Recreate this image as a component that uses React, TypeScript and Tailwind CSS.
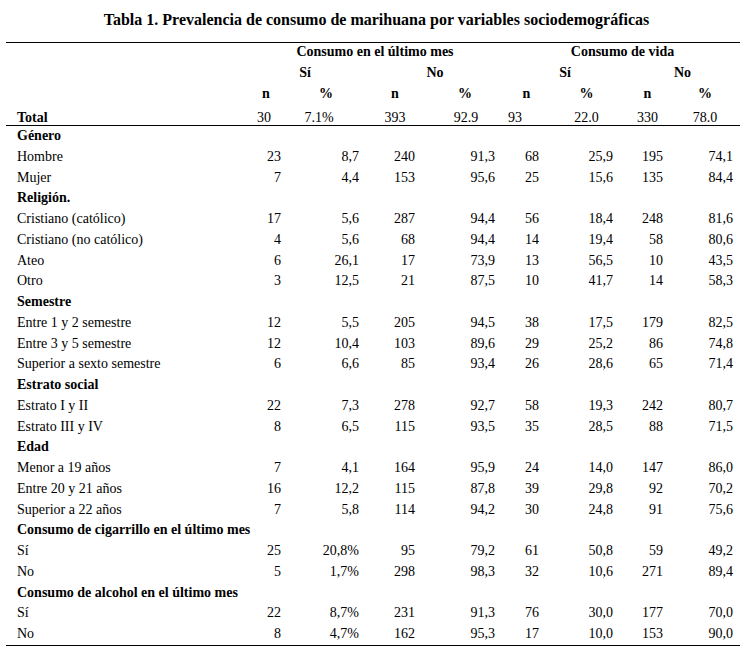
import React from 'react';

type Row = { label: string; head?: boolean; v?: string[] };

const rows: Row[] = [
  { label: 'Género', head: true },
  { label: 'Hombre', v: ['23', '8,7', '240', '91,3', '68', '25,9', '195', '74,1'] },
  { label: 'Mujer', v: ['7', '4,4', '153', '95,6', '25', '15,6', '135', '84,4'] },
  { label: 'Religión.', head: true },
  { label: 'Cristiano (católico)', v: ['17', '5,6', '287', '94,4', '56', '18,4', '248', '81,6'] },
  { label: 'Cristiano (no católico)', v: ['4', '5,6', '68', '94,4', '14', '19,4', '58', '80,6'] },
  { label: 'Ateo', v: ['6', '26,1', '17', '73,9', '13', '56,5', '10', '43,5'] },
  { label: 'Otro', v: ['3', '12,5', '21', '87,5', '10', '41,7', '14', '58,3'] },
  { label: 'Semestre', head: true },
  { label: 'Entre 1 y 2 semestre', v: ['12', '5,5', '205', '94,5', '38', '17,5', '179', '82,5'] },
  { label: 'Entre 3 y 5 semestre', v: ['12', '10,4', '103', '89,6', '29', '25,2', '86', '74,8'] },
  { label: 'Superior a sexto semestre', v: ['6', '6,6', '85', '93,4', '26', '28,6', '65', '71,4'] },
  { label: 'Estrato social', head: true },
  { label: 'Estrato I y II', v: ['22', '7,3', '278', '92,7', '58', '19,3', '242', '80,7'] },
  { label: 'Estrato III y IV', v: ['8', '6,5', '115', '93,5', '35', '28,5', '88', '71,5'] },
  { label: 'Edad', head: true },
  { label: 'Menor a 19 años', v: ['7', '4,1', '164', '95,9', '24', '14,0', '147', '86,0'] },
  { label: 'Entre 20 y 21 años', v: ['16', '12,2', '115', '87,8', '39', '29,8', '92', '70,2'] },
  { label: 'Superior a 22 años', v: ['7', '5,8', '114', '94,2', '30', '24,8', '91', '75,6'] },
  { label: 'Consumo de cigarrillo en el último mes', head: true },
  { label: 'Sí', v: ['25', '20,8%', '95', '79,2', '61', '50,8', '59', '49,2'] },
  { label: 'No', v: ['5', '1,7%', '298', '98,3', '32', '10,6', '271', '89,4'] },
  { label: 'Consumo de alcohol en el último mes', head: true },
  { label: 'Sí', v: ['22', '8,7%', '231', '91,3', '76', '30,0', '177', '70,0'] },
  { label: 'No', v: ['8', '4,7%', '162', '95,3', '17', '10,0', '153', '90,0'] },
];

// right padding per numeric column so values line up like the original
const pads = ['pr-[6px]', 'pr-[6px]', 'pr-[10px]', 'pr-[10px]', 'pr-[9px]', 'pr-[12px]', 'pr-[7px]', 'pr-[7px]'];

const cols = 'grid grid-cols-[239px_42px_78px_60px_80px_43px_77px_45px_70px]';

const App: React.FC = () => {
  return (
    <div className="h-[665px] w-[753px] bg-white text-black font-['Liberation_Serif',serif] text-[14px]">
      <h1 className="pt-[11px] text-center text-[16px] font-bold leading-[18px]">
        Tabla 1. Prevalencia de consumo de marihuana por variables sociodemográficas
      </h1>

      <div className="ml-[6px] mt-[13px] w-[734px] border-t border-black">
        {/* cabecera */}
        <div className={`${cols} h-[17px] pt-[1px] font-bold leading-[16px]`}>
          <div />
          <div className="col-span-4 text-center">Consumo en el último mes</div>
          <div className="col-span-4 text-center">Consumo de vida</div>
        </div>
        <div className={`${cols} h-[22px] pt-[2px] font-bold leading-[22px]`}>
          <div />
          <div className="col-span-2 text-center">Sí</div>
          <div className="col-span-2 text-center">No</div>
          <div className="col-span-2 text-center">Sí</div>
          <div className="col-span-2 text-center">No</div>
        </div>
        <div className={`${cols} h-[23px] pt-[2px] font-bold leading-[20px]`}>
          <div />
          {['n', '%', 'n', '%', 'n', '%', 'n', '%'].map((h, i) => (
            <div key={i} className="text-center">
              {h}
            </div>
          ))}
        </div>
        <div className={`${cols} h-[21px] border-b border-black pt-[5px] leading-[16px]`}>
          <div className="pl-[11px] font-bold">Total</div>
          <div className="pr-[4px] text-center">30</div>
          <div className="pr-[14px] text-center">7.1%</div>
          <div className="text-center">393</div>
          <div className="pl-[2px] text-center">92.9</div>
          <div className="pl-[3px]">93</div>
          <div className="text-center">22.0</div>
          <div className="text-center">330</div>
          <div className="text-center">78.0</div>
        </div>

        {/* filas */}
        <div className="border-b border-black">
          {rows.map((r, i) => (
            <div key={i} className={`${cols} h-[20.75px] leading-[20.75px]`}>
              <div className={`pl-[11px] whitespace-nowrap ${r.head ? 'font-bold' : ''}`}>{r.label}</div>
              {r.v
                ? r.v.map((x, j) => (
                    <div key={j} className={`text-right ${pads[j]}`}>
                      {x}
                    </div>
                  ))
                : null}
            </div>
          ))}
        </div>
      </div>
    </div>
  );
};

export default App;
